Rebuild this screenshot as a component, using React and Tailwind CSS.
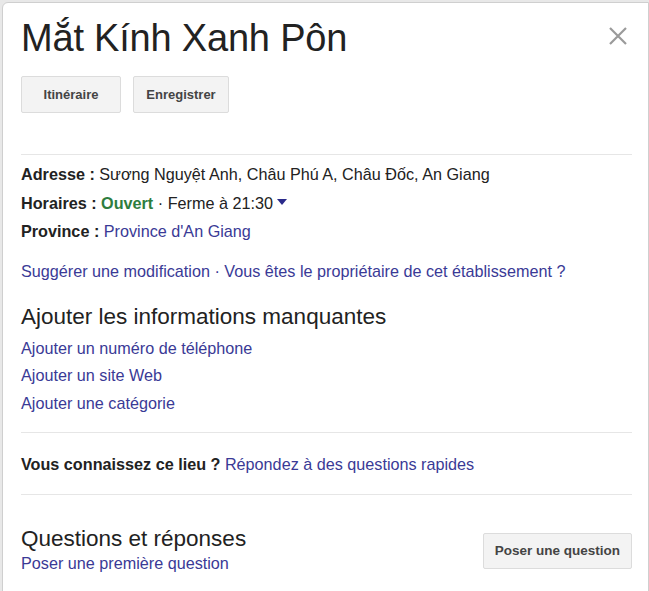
import React from "react";

function Divider({ className = "" }) {
  return <div className={"h-px bg-[#e6e6e6] " + className} />;
}

export default function App() {
  const link = "text-[#3a3a96]";
  return (
    <div className="w-[649px] h-[591px] bg-[#e8e8e8] overflow-hidden" style={{ fontFamily: '"Liberation Sans", Arial, sans-serif' }}>
      <div className="ml-[2px] mt-[2px] h-[600px] bg-white border border-[#cfcfcf] rounded-tl-[6px] pl-[18px] pr-[16px] relative">
        <button className="absolute right-[20px] top-[23px] text-[#9a9a9a]" aria-label="close">
          <svg width="20" height="20" viewBox="0 0 20 20" fill="none" stroke="currentColor" strokeWidth="2.2">
            <path d="M2 2 L18 18 M18 2 L2 18" />
          </svg>
        </button>
        <h1 className="text-[38px] leading-none text-[#222] pt-[16px] tracking-[-0.2px]">Mắt Kính Xanh Pôn</h1>
        <div className="flex gap-[12px] mt-[19px]">
          <button className="h-[37px] w-[100px] bg-[#f3f3f3] border border-[#dcdcdc] rounded-[2px] text-[13px] font-bold text-[#444]">Itinéraire</button>
          <button className="h-[37px] w-[96px] bg-[#f3f3f3] border border-[#dcdcdc] rounded-[2px] text-[13px] font-bold text-[#444]">Enregistrer</button>
        </div>
        <Divider className="mt-[41px]" />
        <div className="text-[16.2px] text-[#222] mt-[5px] leading-[28.5px]">
          <div><span className="font-bold">Adresse : </span>Sương Nguyệt Anh, Châu Phú A, Châu Đốc, An Giang</div>
          <div className="flex items-center">
            <span className="font-bold">Horaires :&nbsp;</span>
            <span className="font-bold text-[#2e7d3e]">Ouvert</span>
            <span>&nbsp;· Ferme à 21:30</span>
            <svg width="10" height="6" viewBox="0 0 10 6" className="ml-[4px] mb-[2px]"><path d="M0 0 L10 0 L5 6 Z" fill="#2a2a8a" /></svg>
          </div>
          <div><span className="font-bold">Province : </span><span className={link}>Province d'An Giang</span></div>
        </div>
        <div className={"text-[16.2px] mt-[13px] " + link}>Suggérer une modification · Vous êtes le propriétaire de cet établissement ?</div>
        <div className="text-[22.5px] text-[#222] mt-[19px] leading-[30px]">Ajouter les informations manquantes</div>
        <div className={"text-[16.2px] leading-[27.5px] mt-[3px] " + link}>
          <div>Ajouter un numéro de téléphone</div>
          <div>Ajouter un site Web</div>
          <div>Ajouter une catégorie</div>
        </div>
        <Divider className="mt-[15px]" />
        <div className="text-[16.2px] mt-[21px] leading-[20px]">
          <span className="font-bold text-[#222]">Vous connaissez ce lieu ? </span>
          <span className={link}>Répondez à des questions rapides</span>
        </div>
        <Divider className="mt-[20px]" />
        <div className="flex items-center justify-between mt-[31px]">
          <div>
            <div className="text-[22.5px] text-[#222] leading-[26px]">Questions et réponses</div>
            <div className={"text-[16.2px] leading-[22px] " + link}>Poser une première question</div>
          </div>
          <button className="h-[36px] px-[11px] bg-[#f3f3f3] border border-[#dcdcdc] rounded-[2px] text-[13.5px] font-bold text-[#444] mt-[1px]">Poser une question</button>
        </div>
      </div>
    </div>
  );
}
